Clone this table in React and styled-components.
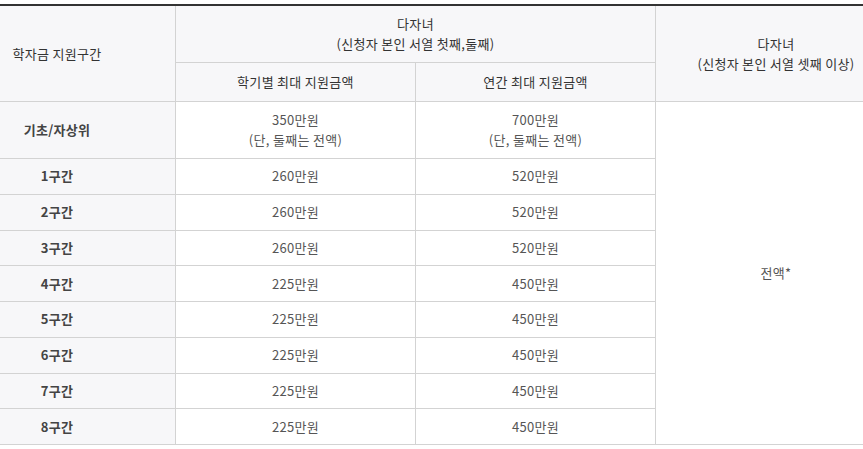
import React from 'react';
import styled, {createGlobalStyle} from 'styled-components';

const Global = createGlobalStyle`
  html, body {
    margin: 0;
    padding: 0;
    background: #fff;
    overflow: hidden;
  }
  body {
    padding-top: 4px;
    font-family: "Noto Sans CJK KR", "Noto Sans", sans-serif;
  }
`;

const Table = styled.div`
  display: grid;
  width: 896px;
  grid-template-columns: 176px 240px 240px 240px;
  grid-template-rows: 57px 39px 57px repeat(8, 35.75px);
  border-top: 2px solid #333;
`;

const Cell = styled.div`
  box-sizing: border-box;
  display: flex;
  flex-direction: column;
  align-items: center;
  justify-content: center;
  border-bottom: 1px solid #d3d3d3;
  border-right: ${p => (p.$last ? 'none' : '1px solid #d3d3d3')};
  background: ${p => (p.$head ? '#f7f7f9' : '#fff')};
  color: ${p => (p.$head ? '#333' : '#555')};
  font-size: 13px;
  letter-spacing: 0.3px;
  line-height: 20px;
  text-align: center;
  grid-row: ${p => p.$row || 'auto'};
  grid-column: ${p => p.$col || 'auto'};
`;

const LabelCell = styled(Cell)`
  align-items: flex-start;
`;

const Label = styled.span`
  width: 114px;
  text-align: center;
  font-weight: ${p => (p.$bold ? 700 : 400)};
  color: ${p => (p.$bold ? '#444' : '#333')};
`;

const rows = [
  ['1구간', '260만원', '520만원'],
  ['2구간', '260만원', '520만원'],
  ['3구간', '260만원', '520만원'],
  ['4구간', '225만원', '450만원'],
  ['5구간', '225만원', '450만원'],
  ['6구간', '225만원', '450만원'],
  ['7구간', '225만원', '450만원'],
  ['8구간', '225만원', '450만원'],
];

export default function App() {
  return (
    <>
      <Global/>
      <Table>
        <LabelCell $head $row="1 / 3" $col="1">
          <Label>학자금 지원구간</Label>
        </LabelCell>
        <Cell $head $col="2 / 4">
          <span>다자녀</span>
          <span>(신청자 본인 서열 첫째,둘째)</span>
        </Cell>
        <Cell $head $last $row="1 / 3" $col="4">
          <span>다자녀</span>
          <span>(신청자 본인 서열 셋째 이상)</span>
        </Cell>
        <Cell $head $row="2" $col="2">학기별 최대 지원금액</Cell>
        <Cell $head $row="2" $col="3">연간 최대 지원금액</Cell>

        <LabelCell $head $row="3" $col="1">
          <Label $bold>기초/자상위</Label>
        </LabelCell>
        <Cell $row="3" $col="2">
          <span>350만원</span>
          <span>(단, 둘째는 전액)</span>
        </Cell>
        <Cell $row="3" $col="3">
          <span>700만원</span>
          <span>(단, 둘째는 전액)</span>
        </Cell>
        <Cell $last $row="3 / 12" $col="4">전액*</Cell>

        {rows.map((r, i) => (
          <React.Fragment key={r[0]}>
            <LabelCell $head $row={i + 4} $col="1">
              <Label $bold>{r[0]}</Label>
            </LabelCell>
            <Cell $row={i + 4} $col="2">{r[1]}</Cell>
            <Cell $row={i + 4} $col="3">{r[2]}</Cell>
          </React.Fragment>
        ))}
      </Table>
    </>
  );
}
